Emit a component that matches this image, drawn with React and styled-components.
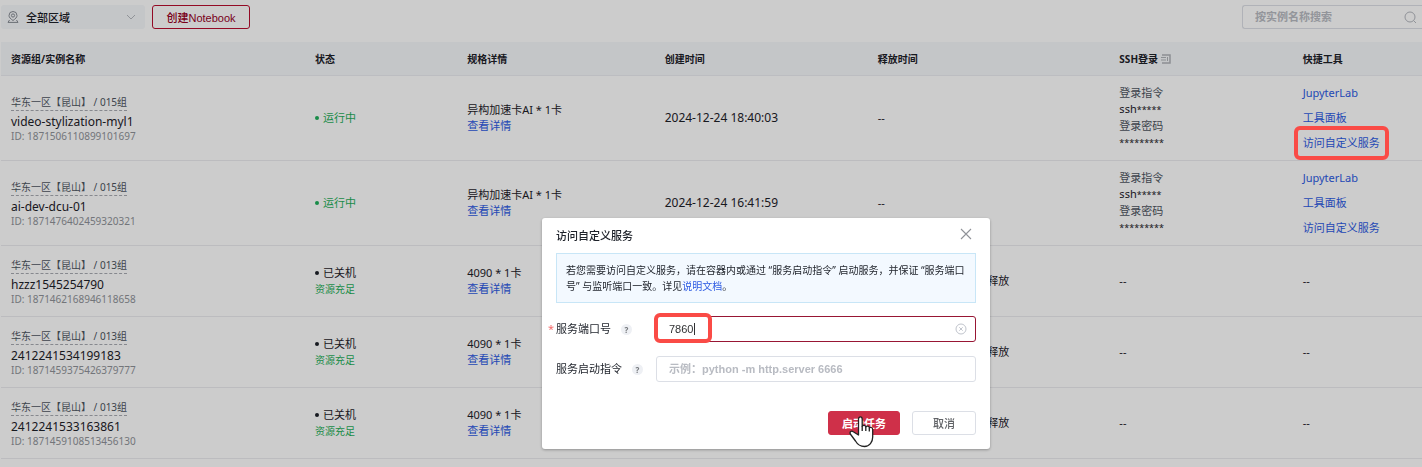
import React, { useState } from 'react'
import styled, { createGlobalStyle, css } from 'styled-components'

const uiFont = `'Noto Sans', 'Noto Sans CJK SC', sans-serif`
const controlFont = `'Liberation Sans', 'Noto Sans CJK SC', sans-serif`

const instances = [
  {
    zone: '华东一区【昆山】 / 015组',
    name: 'video-stylization-myl1',
    id: '1871506110899101697',
    running: true,
    spec: '异构加速卡AI * 1卡',
    created: '2024-12-24 18:40:03',
    release: '--',
    marked: true,
  },
  {
    zone: '华东一区【昆山】 / 015组',
    name: 'ai-dev-dcu-01',
    id: '1871476402459320321',
    running: true,
    spec: '异构加速卡AI * 1卡',
    created: '2024-12-24 16:41:59',
    release: '--',
  },
  {
    zone: '华东一区【昆山】 / 013组',
    name: 'hzzz1545254790',
    id: '1871462168946118658',
    spec: '4090 * 1卡',
    release: '释放',
  },
  {
    zone: '华东一区【昆山】 / 013组',
    name: '2412241534199183',
    id: '1871459375426379777',
    spec: '4090 * 1卡',
    release: '释放',
  },
  {
    zone: '华东一区【昆山】 / 013组',
    name: '2412241533163861',
    id: '1871459108513456130',
    spec: '4090 * 1卡',
    release: '释放',
  },
]

const App = () => {
  return (
    <>
      <GlobalStyle />
      <Toolbar />
      <InstanceTable />
      <Overlay>
        <ServiceDialog />
      </Overlay>
    </>
  )
}

const Toolbar = () => {
  return (
    <Bar>
      <RegionPicker>
        <PinIcon />
        <RegionSelect aria-label="区域" defaultValue="all">
          <option value="all">全部区域</option>
        </RegionSelect>
        <ChevronIcon />
      </RegionPicker>
      <CreateButton type="button">创建Notebook</CreateButton>
      <SearchBox>
        <SearchInput aria-label="搜索" placeholder="按实例名称搜索" />
        <SearchIcon />
      </SearchBox>
    </Bar>
  )
}

const InstanceTable = () => {
  return (
    <Table>
      <thead>
        <tr>
          <HeadCell $width="21.4%">资源组/实例名称</HeadCell>
          <HeadCell $width="10.7%">状态</HeadCell>
          <HeadCell $width="13.9%">规格详情</HeadCell>
          <HeadCell $width="15%">创建时间</HeadCell>
          <HeadCell $width="17%">释放时间</HeadCell>
          <HeadCell $width="12.9%">
            <HeadLabel>
              SSH登录
              <DocIcon />
            </HeadLabel>
          </HeadCell>
          <HeadCell>快捷工具</HeadCell>
        </tr>
      </thead>
      <tbody>
        {instances.map(item => (
          <InstanceRow key={item.id} item={item} />
        ))}
      </tbody>
    </Table>
  )
}

const InstanceRow = ({ item }) => {
  return (
    <Row $tall={item.running}>
      <Cell>
        <Zone>{item.zone}</Zone>
        <Name>{item.name}</Name>
        <InstanceId>ID: {item.id}</InstanceId>
      </Cell>
      <Cell>
        <Status $running={item.running}>{item.running ? '运行中' : '已关机'}</Status>
        {!item.running && <Stock>资源充足</Stock>}
      </Cell>
      <Cell>
        <div>{item.spec}</div>
        <Link href="#spec">查看详情</Link>
      </Cell>
      <DateCell>{item.created}</DateCell>
      <ReleaseCell $stopped={!item.running}>{item.release}</ReleaseCell>
      <Cell>
        {item.running ? (
          <>
            <Muted>登录指令</Muted>
            <div>
              ssh<Stars>*****</Stars>
            </div>
            <Muted>登录密码</Muted>
            <div>
              <Stars>*********</Stars>
            </div>
          </>
        ) : (
          '--'
        )}
      </Cell>
      <Cell>
        {item.running ? (
          <Tools>
            <Link href="#jupyter">JupyterLab</Link>
            <Link href="#panel">工具面板</Link>
            <Link href="#service">
              访问自定义服务
              {item.marked && <LinkMark />}
            </Link>
          </Tools>
        ) : (
          '--'
        )}
      </Cell>
    </Row>
  )
}

const ServiceDialog = () => {
  const [port, setPort] = useState('7860')

  return (
    <Dialog role="dialog" aria-labelledby="dialog-title">
      <DialogHeader>
        <DialogTitle id="dialog-title">访问自定义服务</DialogTitle>
        <CloseButton type="button" aria-label="关闭">
          <svg width="12" height="12" viewBox="0 0 12 12">
            <path d="M1 1l10 10M11 1L1 11" stroke="#909399" strokeWidth="1.1" />
          </svg>
        </CloseButton>
      </DialogHeader>
      <Notice>
        若您需要访问自定义服务，请在容器内或通过 “服务启动指令” 启动服务，并保证 “服务端口号” 与监听端口一致。详见
        <Link href="#docs">说明文档</Link>。
      </Notice>
      <Field>
        <Label htmlFor="port" $required>
          服务端口号 <Help>?</Help>
        </Label>
        <InputWrap $active>
          <TextInput id="port" value={port} onChange={e => setPort(e.target.value)} />
          <Caret />
          <ClearIcon />
          <PortMark />
        </InputWrap>
      </Field>
      <Field>
        <Label htmlFor="command">
          服务启动指令 <Help>?</Help>
        </Label>
        <InputWrap>
          <TextInput id="command" placeholder="示例：python -m http.server 6666" />
        </InputWrap>
      </Field>
      <Actions>
        <PrimaryButton type="button">
          启动任务
          <HandCursor />
        </PrimaryButton>
        <PlainButton type="button">取消</PlainButton>
      </Actions>
    </Dialog>
  )
}

/* icons */

const PinIcon = () => (
  <svg width="12" height="12" viewBox="0 0 12 12" fill="none" stroke="#858a92">
    <path d="M6 9.500C3.500 7.800 2 6.300 2 4.500a4 4 0 0 1 8 0C10 6.300 8.500 7.800 6 9.500z" />
    <circle cx="6" cy="4.500" r="1.600" />
    <path d="M2.500 9L1 11.400h10L9.500 9" />
  </svg>
)

const ChevronIcon = () => (
  <svg width="10" height="10" viewBox="0 0 10 10" fill="none" stroke="#b4b8bf">
    <path d="M1 3l4 4 4-4" />
  </svg>
)

const SearchIcon = () => (
  <svg width="13" height="13" viewBox="0 0 13 13" fill="none" stroke="#b4b8bf">
    <circle cx="6" cy="6" r="5" />
    <path d="M9.500 9.500L12 12" />
  </svg>
)

const DocIcon = () => (
  <svg width="10" height="10" viewBox="0 0 10 10" fill="none">
    <path d="M1 1h8v8H1" stroke="#b0b3b8" strokeWidth="1.500" />
    <path d="M0 3.500h5M0 6h5M6.500 3v4" stroke="#b0b3b8" />
  </svg>
)

const ClearIcon = () => (
  <svg width="12" height="12" viewBox="0 0 12 12" fill="none" stroke="#c0c4cc">
    <circle cx="6" cy="6" r="5" />
    <path d="M4.300 4.300l3.400 3.400M7.700 4.300L4.300 7.700" />
  </svg>
)

const HandCursor = () => (
  <Cursor width="26" height="32" viewBox="0 0 26 32">
    <path
      d="M9.500 19V3.200c0-3 3.700-3 3.700 0v7c.6-1.400 3.300-1.200 3.600.6.800-1.100 3.300-.8 3.500 1 1-.9 3.400-.5 3.400 1.700V21c0 5-3.200 9.500-8.200 9.500-4.800 0-7-2-9-5.500L1.300 18c-1-2 1.200-3.700 3-2.300z"
      fill="#fff"
      stroke="#222"
      strokeWidth="1.300"
      strokeLinejoin="round"
    />
    <path d="M13.200 10v5M16.800 11v4M20.300 12v3.500" stroke="#222" strokeWidth="1.300" />
  </Cursor>
)

/* styles */

const GlobalStyle = createGlobalStyle`
  * {
    box-sizing: border-box;
  }
  body {
    margin: 0;
    overflow: hidden;
    background: #fff;
    color: #1d2129;
    font-family: ${uiFont};
    font-size: 11px;
    line-height: 16px;
  }
  svg {
    flex: none;
  }
`

const Bar = styled.div`
  display: flex;
  align-items: center;
  gap: 7px;
  padding: 5px 0 13px 1px;
`

const RegionPicker = styled.div`
  display: flex;
  align-items: center;
  width: 144px;
  height: 24px;
  padding: 0 9px 0 6px;
  border-radius: 3px;
  background: #f6f8fb;
`

const RegionSelect = styled.select`
  flex: 1;
  appearance: none;
  padding: 0 0 0 7px;
  border: 0;
  background: none;
  color: #1d2129;
  font: 500 11px ${uiFont};
`

const buttonBase = css`
  height: 24px;
  padding: 0;
  border-radius: 3px;
  font: 500 11px ${controlFont};
`

const CreateButton = styled.button`
  ${buttonBase}
  width: 98px;
  border: 1px solid #b80d2f;
  background: #fff;
  color: #98001f;
`

const SearchBox = styled.label`
  display: flex;
  align-items: center;
  width: 180px;
  height: 24px;
  margin-left: auto;
  padding: 0 5px 0 12px;
  border: 1px solid #dcdfe6;
  border-right: 0;
  border-radius: 3px 0 0 3px;
`

const inputText = css`
  flex: 1;
  min-width: 0;
  padding: 0;
  border: 0;
  outline: 0;
  background: none;
  color: #303133;
  font: 11px ${controlFont};

  &::placeholder {
    color: #b8bbc2;
    font-weight: 700;
  }
`

const SearchInput = styled.input`
  ${inputText}
`

const Table = styled.table`
  width: 100%;
  padding-left: 1px;
  border-spacing: 0;
  table-layout: fixed;
`

const HeadCell = styled.th`
  width: ${props => props.$width || 'auto'};
  height: 34px;
  padding: 0 10px;
  border-bottom: 1px solid #ebedf2;
  background: #f6f8fb;
  font-size: 10px;
  font-weight: 700;
  text-align: left;
`

const HeadLabel = styled.span`
  display: flex;
  align-items: center;
  gap: 3px;
`

const Cell = styled.td`
  padding: 0 10px;
  border-bottom: 1px solid #ececef;
  vertical-align: middle;
`

const DateCell = styled(Cell)`
  font-size: 12px;
`

const ReleaseCell = styled(Cell)`
  ${props =>
    props.$stopped &&
    css`
      padding-right: 100px;
      text-align: right;
    `}
`

const Row = styled.tr`
  height: ${props => (props.$tall ? 85 : 71)}px;
`

const Zone = styled.div`
  width: fit-content;
  margin-bottom: 3px;
  border-bottom: 1px dashed #a8abb2;
  color: #4e5560;
  font-size: 10px;
`

const Name = styled.div`
  font-size: 12px;
`

const InstanceId = styled.div`
  color: #909399;
  font-size: 10px;
  line-height: 12px;
`

const Status = styled.div`
  display: flex;
  align-items: center;
  gap: 4px;
  color: ${props => (props.$running ? '#1faf5a' : 'inherit')};

  &::before {
    content: '';
    width: 4px;
    height: 4px;
    border-radius: 50%;
    background: currentColor;
  }
`

const Stock = styled.div`
  color: #1faf5a;
  font-size: 10px;
`

const Muted = styled.div`
  color: #4e5560;
`

const Stars = styled.span`
  font-size: 9px;
`

const Link = styled.a`
  position: relative;
  color: #2d5be3;
  text-decoration: none;
`

const Tools = styled.div`
  display: flex;
  flex-direction: column;
  align-items: flex-start;
  gap: 9px;
`

// red frames sit above the dimmed page
const mark = css`
  position: absolute;
  z-index: 20;
  border: 4px solid #fa4b46;
  border-radius: 6px;
  pointer-events: none;
`

const LinkMark = styled.span`
  ${mark}
  inset: -9px -9px;
`

const PortMark = styled.span`
  ${mark}
  top: -4px;
  left: -3px;
  width: 58px;
  height: 30px;
`

const Overlay = styled.div`
  position: fixed;
  inset: 0;
  z-index: 10;
  display: flex;
  justify-content: center;
  align-items: flex-start;
  padding: 218px 0 0 110px;
  background: rgba(0, 0, 0, 0.2);
`

const Dialog = styled.div`
  width: 448px;
  padding: 8px 14px 14px;
  border-radius: 3px;
  background: #fff;
  box-shadow: 0 1px 3px rgba(0, 0, 0, 0.3);
`

const DialogHeader = styled.div`
  display: flex;
  align-items: center;
  justify-content: space-between;
  height: 16px;
  margin-bottom: 11px;
  padding-right: 4px;
`

const DialogTitle = styled.h2`
  margin: 0;
  padding-top: 4px;
  font-size: 11px;
  font-weight: 500;
`

const CloseButton = styled.button`
  display: flex;
  padding: 0;
  border: 0;
  background: none;
`

const Notice = styled.p`
  margin: 0 0 13px;
  padding: 8px 9px;
  border: 1px solid #c8e6f7;
  background: #f3f9ff;
  font-size: 10px;
`

const Field = styled.div`
  display: flex;
  align-items: center;
  margin-bottom: 14px;
`

const Label = styled.label`
  position: relative;
  display: flex;
  align-items: center;
  gap: 10px;
  width: 100px;

  ${props =>
    props.$required &&
    css`
      &::before {
        content: '*';
        position: absolute;
        left: -8px;
        color: #f56c6c;
      }
    `}
`

const Help = styled.span`
  width: 11px;
  height: 11px;
  border-radius: 50%;
  background: #eef0f4;
  color: #73767a;
  font-size: 8px;
  font-weight: 700;
  line-height: 11px;
  text-align: center;
`

const InputWrap = styled.div`
  position: relative;
  display: flex;
  flex: 1;
  align-items: center;
  height: 26px;
  padding: 0 8px 0 12px;
  border: 1px solid ${props => (props.$active ? '#981634' : '#dcdfe6')};
  border-radius: 3px;
`

const TextInput = styled.input`
  ${inputText}
`

const Caret = styled.span`
  position: absolute;
  left: 37px;
  width: 1px;
  height: 12px;
  background: #303133;
`

const Actions = styled.div`
  display: flex;
  justify-content: flex-end;
  gap: 12px;
  padding-top: 15px;
`

const PrimaryButton = styled.button`
  ${buttonBase}
  position: relative;
  width: 72px;
  border: 1px solid #cf3049;
  background: #cf3049;
  color: #fff;
  font-weight: 700;
`

const PlainButton = styled.button`
  ${buttonBase}
  width: 64px;
  border: 1px solid #dcdfe6;
  background: #fff;
  color: #606266;
`

const Cursor = styled.svg`
  position: absolute;
  top: 4px;
  left: 20px;
`

export default App
